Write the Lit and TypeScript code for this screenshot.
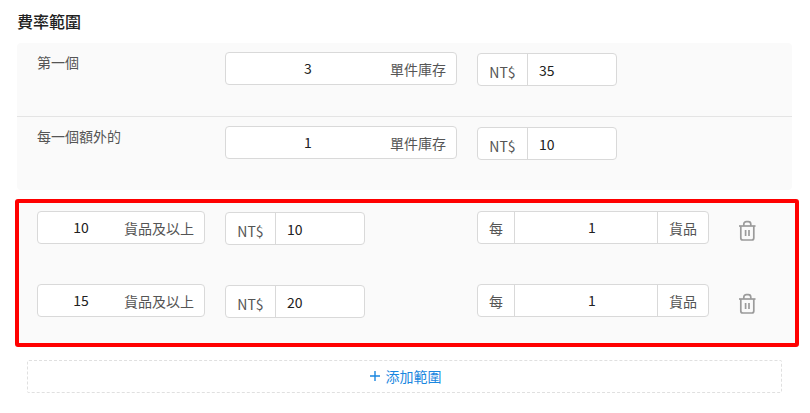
import { LitElement, css, html, svg } from 'lit';
import { customElement } from 'lit/decorators.js';

const trash = svg`<path d="M2 6h16.5" /><path d="M3.8 6v12a2 2 0 0 0 2 2h9a2 2 0 0 0 2-2v-12" /><path d="M6.8 6v-1.8a2.5 2.5 0 0 1 2.5-2.5h2a2.5 2.5 0 0 1 2.5 2.5v1.8" /><path d="M8.6 10v6" /><path d="M12 10v6" />`;

@customElement('app-root')
export class AppRoot extends LitElement {
  static styles = css`
    :host {
      display: block;
      width: 810px;
      height: 413px;
      overflow: hidden;
      background: #fff;
      color: #333;
      font-family: "Noto Sans CJK TC", "Noto Sans", sans-serif;
      font-size: 14px;
    }
    * { box-sizing: border-box; }
    .title {
      margin: 0;
      padding: 10px 0 0 17px;
      height: 43px;
      font-size: 16px;
      line-height: 22px;
      font-weight: 500;
      color: #212121;
    }
    .panel {
      width: 775px;
      margin-left: 17px;
      background: #fafafa;
      border-radius: 4px;
    }
    .row {
      display: grid;
      grid-template-columns: 168px 232px 232px 30px;
      column-gap: 20px;
      align-items: start;
      height: 73px;
      padding: 9px 0 0 20px;
    }
    .panel .row:first-child {
      height: 74px;
      border-bottom: 1px solid #e4e4e4;
    }
    .label {
      line-height: 20px;
      color: #555;
    }
    .marked {
      width: 784px;
      height: 148px;
      margin: 9px 0 0 15px;
      background: #fafafa;
      border: 4px solid #f00;
      border-radius: 3px;
    }
    .marked .row {
      padding-left: 18px;
      padding-top: 8px;
    }
    .field {
      display: flex;
      height: 33px;
      background: #fff;
      border: 1px solid #d9d9d9;
      border-radius: 4px;
      overflow: hidden;
    }
    .short { width: 140px; margin-top: 1px; }
    .value {
      flex: 1;
      min-width: 0;
      border: 0;
      outline: 0;
      background: transparent;
      padding: 0 0 2px;
      font: inherit;
      color: #212121;
      text-align: center;
    }
    .short .value {
      text-align: left;
      padding: 0 0 0 11px;
    }
    .per .value { padding-left: 12px; }
    .unit {
      display: flex;
      align-items: center;
      padding-right: 10px;
      color: #555;
    }
    .addon {
      display: flex;
      align-items: center;
      justify-content: center;
      color: #555;
    }
    .currency {
      width: 50px;
      padding-top: 4px;
      border-right: 1px solid #d9d9d9;
    }
    .each {
      width: 37px;
      border-right: 1px solid #d9d9d9;
    }
    .goods {
      width: 51px;
      border-left: 1px solid #d9d9d9;
    }
    .delete {
      display: block;
      margin: 9px 0 0 8px;
      width: 21px;
      height: 21px;
      fill: none;
      stroke: #9b9b9b;
      stroke-width: 1.7;
    }
    .add {
      display: flex;
      align-items: center;
      justify-content: center;
      gap: 6px;
      width: 755px;
      height: 33px;
      margin: 13px 0 0 27px;
      padding: 0 0 2px 2px;
      border: 1px dashed #e0e0e0;
      border-radius: 2px;
      color: #1a87e0;
    }
    .add svg {
      width: 10px;
      height: 10px;
      stroke: #1a87e0;
      stroke-width: 1.4;
    }
  `;

  private price(value: string) {
    return html`<div class="field short">
      <span class="addon currency">NT$</span>
      <input class="value" .value=${value} />
    </div>`;
  }

  private tier(from: string, value: string) {
    return html`<div class="row">
      <div class="field">
        <input class="value" .value=${from} />
        <span class="unit">貨品及以上</span>
      </div>
      ${this.price(value)}
      <div class="field per">
        <span class="addon each">每</span>
        <input class="value" value="1" />
        <span class="addon goods">貨品</span>
      </div>
      <svg class="delete" viewBox="0 0 21 21">${trash}</svg>
    </div>`;
  }

  private base(label: string, qty: string, value: string) {
    return html`<div class="row">
      <div class="label">${label}</div>
      <div class="field">
        <input class="value" .value=${qty} />
        <span class="unit">單件庫存</span>
      </div>
      ${this.price(value)}
    </div>`;
  }

  render() {
    return html`
      <h3 class="title">費率範圍</h3>
      <div class="panel">
        ${this.base('第一個', '3', '35')}
        ${this.base('每一個額外的', '1', '10')}
      </div>
      <div class="marked">
        ${this.tier('10', '10')}
        ${this.tier('15', '20')}
      </div>
      <div class="add">
        <svg viewBox="0 0 10 10"><path d="M5 0v10M0 5h10" /></svg>
        <span>添加範圍</span>
      </div>
    `;
  }
}
